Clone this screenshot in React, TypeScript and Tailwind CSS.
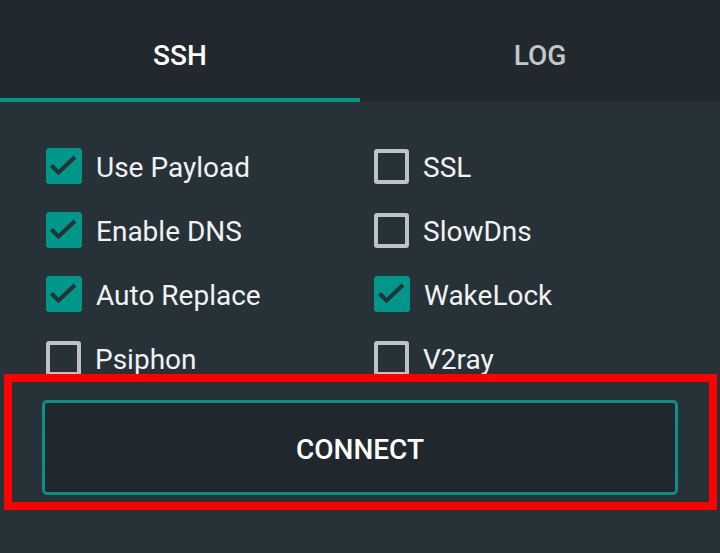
import React from "react";

const font = { fontFamily: "Roboto, 'Noto Sans', sans-serif" };

function Box({ checked }: { checked: boolean }) {
  if (checked) {
    return (
      <div className="w-[36px] h-[36px] rounded-[3px] bg-[#009688] flex items-center justify-center shrink-0">
        <svg width="36" height="36" viewBox="0 0 36 36">
          <path d="M5.5 17.5 L12.5 24.5 L29 9" fill="none" stroke="#263238" strokeWidth="4" strokeLinecap="butt" strokeLinejoin="miter" />
        </svg>
      </div>
    );
  }
  return <div className="w-[35px] h-[35px] rounded-[3px] border-[4px] border-[#bfc3c5] shrink-0" />;
}

function Item({ label, checked }: { label: string; checked: boolean }) {
  return (
    <div className="h-16 flex items-center gap-[14px]">
      <Box checked={checked} />
      <span className="pt-[4px] text-[28px] leading-none text-[#f2f2f2]">{label}</span>
    </div>
  );
}

export default function App() {
  const items: [string, boolean, string, boolean][] = [
    ["Use Payload", true, "SSL", false],
    ["Enable DNS", true, "SlowDns", false],
    ["Auto Replace", true, "WakeLock", true],
    ["Psiphon", false, "V2ray", false],
  ];
  return (
    <div className="relative w-[720px] h-[553px] bg-[#263238] overflow-hidden" style={font}>
      <div className="h-[102px] bg-[#21292e] flex">
        <div className="w-[360px] flex flex-col">
          <div className="flex-1 flex items-center justify-center pt-[14px] text-[28px] font-medium text-white">SSH</div>
          <div className="h-[4px] bg-[#009688]" />
        </div>
        <div className="w-[360px] flex flex-col">
          <div className="flex-1 flex items-center justify-center pt-[14px] text-[28px] font-medium text-[#c4c6c8]">LOG</div>
          <div className="h-[4px]" />
        </div>
      </div>
      <div className="pt-[32px] px-[42px]">
        <div className="grid grid-cols-[328px_1fr] pl-[4px]">
          {items.map(([a, ac, b, bc]) => (
            <React.Fragment key={a}>
              <Item label={a} checked={ac} />
              <Item label={b} checked={bc} />
            </React.Fragment>
          ))}
        </div>
        <div className="mt-[10px] h-[95px] rounded-[5px] border-[3px] border-[#0d8f81] bg-[#21282d] flex items-center justify-center pt-[4px]">
          <span className="text-[28px] font-medium text-white">CONNECT</span>
        </div>
      </div>
      <div className="absolute left-[4px] top-[374px] w-[713px] h-[136px] border-[8px] border-[#ff0000] pointer-events-none" />
    </div>
  );
}
